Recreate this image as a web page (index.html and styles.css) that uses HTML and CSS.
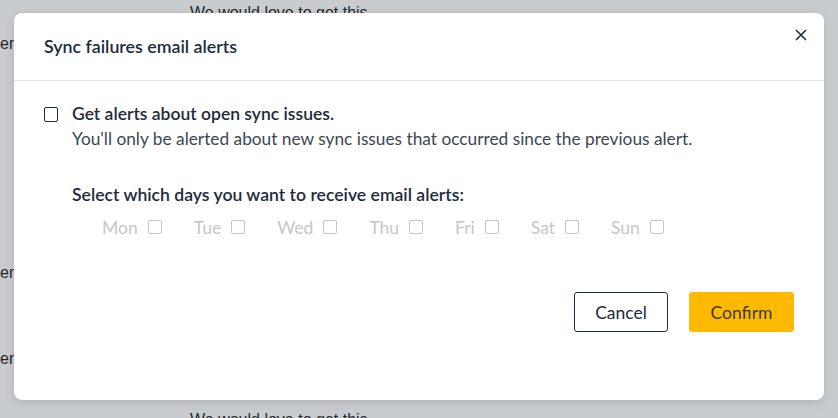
FILE: index.html
```
<!DOCTYPE html>
<html lang="en">
<head>
<meta charset="utf-8">
<title>Sync failures email alerts</title>
<link rel="stylesheet" href="styles.css">
</head>
<body>
<div class="page">
  <p class="bg-text bg-top">We would love to get this</p>
  <p class="bg-text bg-en en1">en</p>
  <p class="bg-text bg-en en2">en</p>
  <p class="bg-text bg-en en3">en</p>
  <p class="bg-text bg-bottom">We would love to get this</p>
</div>
<div class="backdrop">
  <div class="modal" role="dialog" aria-labelledby="modal-title">
    <div class="modal-header">
      <h2 id="modal-title" class="modal-title">Sync failures email alerts</h2>
      <button class="close-btn" aria-label="Close">
        <svg width="12" height="12" viewBox="0 0 12 12"><path d="M1 1L11 11M11 1L1 11" stroke="#1d2b3a" stroke-width="1.6" fill="none"/></svg>
      </button>
    </div>
    <div class="modal-body">
      <label class="alert-option">
        <span class="checkbox"></span>
        <span class="option-text">
          <span class="option-title">Get alerts about open sync issues.</span>
          <span class="option-desc">You'll only be alerted about new sync issues that occurred since the previous alert.</span>
        </span>
      </label>
      <div class="days-section">
        <p class="days-label">Select which days you want to receive email alerts:</p>
        <div class="days">
          <span class="day">Mon <span class="checkbox small"></span></span>
          <span class="day">Tue <span class="checkbox small"></span></span>
          <span class="day">Wed <span class="checkbox small"></span></span>
          <span class="day">Thu <span class="checkbox small"></span></span>
          <span class="day">Fri <span class="checkbox small"></span></span>
          <span class="day">Sat <span class="checkbox small"></span></span>
          <span class="day">Sun <span class="checkbox small"></span></span>
        </div>
      </div>
      <div class="actions">
        <button class="btn btn-cancel">Cancel</button>
        <button class="btn btn-confirm">Confirm</button>
      </div>
    </div>
  </div>
</div>
</body>
</html>
```
FILE: styles.css
```
* { box-sizing: border-box; }
html, body { margin: 0; padding: 0; }
body {
  width: 838px;
  height: 418px;
  overflow: hidden;
  background: #c8ccce;
  font-family: Lato, "Open Sans", sans-serif;
  color: #1d2b3a;
  position: relative;
}
.page {
  position: absolute;
  inset: 0;
}
.bg-text {
  position: absolute;
  margin: 0;
  font-size: 16px;
  line-height: 20px;
  color: #25292d;
  font-family: "Liberation Sans", Arial, sans-serif;
}
.bg-top { left: 190px; top: 3px; }
.bg-bottom { left: 190px; top: 410px; }
.bg-en { left: 0; }
.en1 { top: 34px; }
.en2 { top: 263px; }
.en3 { top: 349px; }

.backdrop {
  position: absolute;
  inset: 0;
  padding: 13px 14px 18px 14px;
  display: flex;
}
.modal {
  flex: 1;
  background: #fff;
  border-radius: 8px;
  box-shadow: 0 3px 10px rgba(0,0,0,0.12);
  display: flex;
  flex-direction: column;
}
.modal-header {
  height: 68px;
  border-bottom: 1px solid #dfe1e8;
  display: flex;
  align-items: center;
  justify-content: space-between;
  padding: 0 13px 2px 30px;
}
.modal-title {
  margin: 0;
  font-size: 17.8px;
  font-weight: 600;
  color: #1d2b3a;
}
.close-btn {
  background: none;
  border: 0;
  padding: 4px;
  align-self: flex-start;
  margin-top: 12px;
  display: flex;
  cursor: pointer;
}
.modal-body {
  flex: 1;
  padding: 21px 30px 0 30px;
  display: flex;
  flex-direction: column;
}
.alert-option {
  display: flex;
  gap: 14px;
  align-items: flex-start;
}
.checkbox {
  display: inline-block;
  width: 14px;
  height: 15px;
  border: 1.5px solid #1d2b3a;
  border-radius: 2px;
  margin-top: 5px;
  flex: none;
}
.option-text {
  display: flex;
  flex-direction: column;
}
.option-title {
  font-size: 17.5px;
  line-height: 24px;
  font-weight: 600;
  color: #1d2b3a;
}
.option-desc {
  font-size: 17.3px;
  line-height: 26px;
  color: #3b4754;
}
.days-section {
  padding-left: 28px;
  margin-top: 31px;
}
.days-label {
  margin: 0;
  font-size: 17.6px;
  line-height: 24px;
  font-weight: 600;
  color: #1d2b3a;
}
.days {
  display: flex;
  gap: 32px;
  padding-left: 30px;
  margin-top: 9px;
}
.day {
  display: inline-flex;
  align-items: center;
  gap: 10px;
  font-size: 17.5px;
  line-height: 24px;
  color: #c6c6c6;
}
.checkbox.small {
  width: 14px;
  height: 14px;
  border: 1px solid #c6c6c6;
  margin-top: -3px;
}
.actions {
  margin-top: 52px;
  display: flex;
  justify-content: flex-end;
  gap: 21px;
}
.btn {
  height: 40px;
  border-radius: 3px;
  font-family: Lato, "Open Sans", sans-serif;
  font-size: 17.5px;
  color: #1d2b3a;
  cursor: pointer;
}
.btn-cancel {
  width: 94px;
  background: #fff;
  border: 1px solid #1d2b3a;
}
.btn-confirm {
  width: 105px;
  background: #ffb900;
  border: 1px solid #ffb900;
  color: #3a3a22;
}
```
